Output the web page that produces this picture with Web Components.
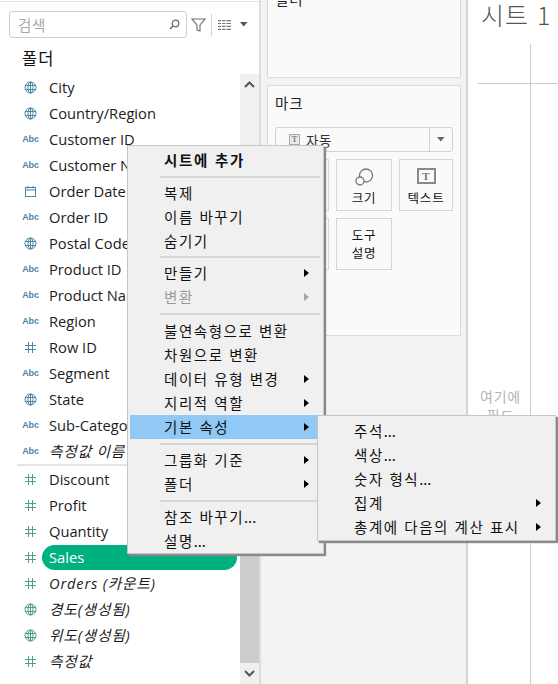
<!DOCTYPE html>
<html lang="ko">
<head>
<meta charset="utf-8">
<title>시트 1</title>
<style>
  html, body { margin: 0; height: 100%; overflow: hidden; background: #fff; }
  body { font-family: "Noto Sans", "Noto Sans CJK KR", sans-serif; color: #111; }
</style>
</head>
<body>
<tab-app>
  <data-pane slot="data">
    <field-row type="globe">City</field-row>
    <field-row type="globe">Country/Region</field-row>
    <field-row type="abc">Customer ID</field-row>
    <field-row type="abc">Customer Name</field-row>
    <field-row type="date">Order Date</field-row>
    <field-row type="abc">Order ID</field-row>
    <field-row type="globe">Postal Code</field-row>
    <field-row type="abc">Product ID</field-row>
    <field-row type="abc">Product Name</field-row>
    <field-row type="abc">Region</field-row>
    <field-row type="hash">Row ID</field-row>
    <field-row type="abc">Segment</field-row>
    <field-row type="globe">State</field-row>
    <field-row type="abc">Sub-Category</field-row>
    <field-row type="abc" italic>측정값 이름</field-row>
    <field-divider></field-divider>
    <field-row type="hash" measure>Discount</field-row>
    <field-row type="hash" measure>Profit</field-row>
    <field-row type="hash" measure>Quantity</field-row>
    <field-row type="hash" measure selected>Sales</field-row>
    <field-row type="hash" measure italic>Orders (카운트)</field-row>
    <field-row type="globe" measure italic>경도(생성됨)</field-row>
    <field-row type="globe" measure italic>위도(생성됨)</field-row>
    <field-row type="hash" measure italic>측정값</field-row>
  </data-pane>
  <shelf-pane slot="shelves"></shelf-pane>
  <sheet-view slot="sheet"></sheet-view>
  <context-menu slot="overlay" style="left:127px;top:145px;width:197px">
    <menu-item bold>시트에 추가</menu-item>
    <menu-sep h="9"></menu-sep>
    <menu-item>복제</menu-item>
    <menu-item>이름 바꾸기</menu-item>
    <menu-item>숨기기</menu-item>
    <menu-sep h="8"></menu-sep>
    <menu-item arrow>만들기</menu-item>
    <menu-item arrow disabled>변환</menu-item>
    <menu-sep h="10"></menu-sep>
    <menu-item>불연속형으로 변환</menu-item>
    <menu-item>차원으로 변환</menu-item>
    <menu-item arrow>데이터 유형 변경</menu-item>
    <menu-item arrow>지리적 역할</menu-item>
    <menu-item arrow active>기본 속성</menu-item>
    <menu-sep h="9"></menu-sep>
    <menu-item arrow>그룹화 기준</menu-item>
    <menu-item arrow>폴더</menu-item>
    <menu-sep h="9"></menu-sep>
    <menu-item>참조 바꾸기<span style="letter-spacing:0">...</span></menu-item>
    <menu-item>설명<span style="letter-spacing:0">...</span></menu-item>
  </context-menu>
  <context-menu slot="overlay" style="left:317px;top:415px;width:239px;padding-top:3px;padding-bottom:1px">
    <menu-item>주석<span style="letter-spacing:0">...</span></menu-item>
    <menu-item>색상<span style="letter-spacing:0">...</span></menu-item>
    <menu-item>숫자 형식<span style="letter-spacing:0">...</span></menu-item>
    <menu-item arrow>집계</menu-item>
    <menu-item arrow>총계에 다음의 계산 표시</menu-item>
  </context-menu>
</tab-app>

<script>
const KO = '"Noto Sans CJK KR", sans-serif';

function tpl(html) {
  const t = document.createElement("template");
  t.innerHTML = html;
  return t;
}

class Base extends HTMLElement {
  constructor() {
    super();
    const shadow = this.attachShadow({ mode: "open" });
    shadow.append(this.constructor.template.content.cloneNode(true));
  }
}

class TabApp extends Base {
  static template = tpl(`
    <style>
      :host { display: grid; grid-template-columns: 261px 207px 1fr; height: 684px; position: relative; overflow: hidden; }
    </style>
    <slot name="data"></slot>
    <slot name="shelves"></slot>
    <slot name="sheet"></slot>
    <slot name="overlay"></slot>
  `);
}

class SearchBar extends Base {
  static template = tpl(`
    <style>
      :host { display: flex; align-items: center; height: 27px; }
      .box { width: 162px; height: 25px; border: 1px solid #cfcfcf; border-radius: 3px; display: flex; align-items: center; justify-content: space-between; padding: 0 6px 0 8px; }
      .ph { font: 14.5px ${KO}; color: #a9a9a9; letter-spacing: .6px; }
      .tools { display: flex; align-items: center; margin-left: 4px; }
      .sep { width: 1px; height: 22px; background: #d2d2d2; margin: 0 6px 0 5px; }
      svg { display: block; }
    </style>
    <div class="box">
      <span class="ph">검색</span>
      <svg width="11" height="11" viewBox="0 0 11 11" fill="none" stroke="#666" stroke-width="1.2"><circle cx="6.5" cy="4.5" r="3.3"/><path d="M4 7 1 10" stroke-width="1.5"/></svg>
    </div>
    <div class="tools">
      <svg width="15" height="14" viewBox="0 0 15 14" fill="none" stroke="#6e6e6e" stroke-width="1.1"><path d="M1 1h13L9 7v6L6 12V7z"/></svg>
      <div class="sep"></div>
      <svg width="13" height="10" viewBox="0 0 13 10" fill="#777"><path d="M0 0h3v1.200H0zM4 0h3.500v1.200H4zM8.500 0H13v1.200H8.500zM0 2.900h3v1.200H0zM4 2.900h3.500v1.200H4zM8.500 2.900H13v1.200H8.500zM0 5.800h3V7H0zM4 5.800h3.500V7H4zM8.500 5.800H13V7H8.500zM0 8.700h3v1.200H0zM4 8.700h3.500v1.200H4zM8.500 8.700H13v1.200H8.500z"/></svg>
      <svg style="margin-left:9px" width="8" height="5" viewBox="0 0 8 5" fill="#555"><path d="M0 0h7.500L3.750 4.500z"/></svg>
    </div>
  `);
}

class ScrollTrack extends Base {
  static template = tpl(`
    <style>
      :host { display: flex; flex-direction: column; width: 19px; background: #f0f0f0; }
      .btn { height: 21px; display: flex; align-items: center; justify-content: center; flex: none; }
      .gap { flex: none; height: 70px; }
      .thumb { flex: 1; background: #cdcdcd; }
    </style>
    <div class="btn"><svg width="11" height="7" viewBox="0 0 11 7" fill="none" stroke="#555" stroke-width="2"><path d="M1 6 5.500 1.500 10 6"/></svg></div>
    <div class="gap"></div>
    <div class="thumb"></div>
    <div class="btn"><svg width="11" height="7" viewBox="0 0 11 7" fill="none" stroke="#555" stroke-width="2"><path d="M1 1l4.500 4.500L10 1"/></svg></div>
  `);
}

class DataPane extends Base {
  static template = tpl(`
    <style>
      :host { display: grid; grid-template-rows: 74px 1fr; grid-template-columns: 240px 19px; border-right: 2px solid #dcdcdc; background: #fff; width: 259px; height: 684px; }
      .head { grid-column: 1 / 3; padding: 9px 0 0 9px; border-top: 1px solid #e4e4e4; margin-top: 1px; box-sizing: border-box; height: 73px; }
      h2 { margin: 10px 0 0 13px; font: 400 16.500px/20px ${KO}; letter-spacing: 1px; color: #111; }
      .list { display: flex; flex-direction: column; overflow: hidden; }
    </style>
    <div class="head">
      <search-bar></search-bar>
      <h2>폴더</h2>
    </div>
    <div class="list"><slot></slot></div>
    <scroll-track></scroll-track>
  `);
}

const GLOBE = `<svg width="13" height="13" viewBox="0 0 13 13" fill="none" stroke="currentColor" stroke-width="1"><circle cx="6.500" cy="6.500" r="5.500"/><ellipse cx="6.500" cy="6.500" rx="2.500" ry="5.500"/><path d="M1 4.500h11M1 8.500h11M6.500 1v11"/></svg>`;
const HASH = `<svg width="11" height="11" viewBox="0 0 11 11" fill="none" stroke="currentColor" stroke-width="1"><path d="M3.500 0v11M7.500 0v11M0 3.500h11M0 7.500h11"/></svg>`;
const DATE = `<svg width="11" height="11" viewBox="0 0 11 11" fill="none" stroke="currentColor" stroke-width="1"><rect x=".5" y="1.500" width="10" height="9"/><path d="M.5 4h10M3 0v2.500M8 0v2.500"/></svg>`;

class FieldRow extends Base {
  static template = tpl(`
    <style>
      :host { display: flex; align-items: center; height: 26px; flex: none; font: 14.700px "Open Sans", ${KO}; color: #1c1c1c; white-space: nowrap; }
      .icon { width: 24px; margin-left: 18px; flex: none; display: flex; justify-content: center; color: #4b87a1; }
      svg { display: block; }
      .abc { font: 700 9px "Liberation Sans", sans-serif; letter-spacing: -.2px; margin-left: 1px; font-style: normal; }
      :host([measure]) .icon { color: #4f9f84; }
      .label { flex: 1; padding-left: 7px; margin-right: 3px; height: 25px; line-height: 25px; border-radius: 13px; }
      :host([italic]) .label { font-style: italic; letter-spacing: .8px; }
      :host([selected]) .label { background: #00b180; color: #fff; }
    </style>
    <div class="icon"></div>
    <div class="label"><slot></slot></div>
  `);
  connectedCallback() {
    const icon = this.shadowRoot.querySelector(".icon");
    const type = this.getAttribute("type");
    if (type === "abc") icon.innerHTML = `<span class="abc">Abc</span>`;
    else icon.innerHTML = type === "globe" ? GLOBE : type === "date" ? DATE : HASH;
  }
}

class FieldDivider extends Base {
  static template = tpl(`
    <style>:host { display: block; height: 2px; flex: none; margin-left: 17px; background: #e4e4e4; }</style>
  `);
}

class ShelfCard extends Base {
  static template = tpl(`
    <style>
      :host { display: block; box-sizing: border-box; background: #fafafa; border: 1.500px solid #dcdcdc; padding: 7px 7px; }
      h3 { margin: 0; font: 400 14.500px/20px ${KO}; letter-spacing: .8px; color: #222; }
    </style>
    <h3><slot name="title"></slot></h3>
    <slot></slot>
  `);
}

class MarkButton extends Base {
  static template = tpl(`
    <style>
      :host { display: flex; flex-direction: column; align-items: center; justify-content: flex-end; height: 52px; box-sizing: border-box; border: 1px solid #d6d6d6; font: 12.500px/18px ${KO}; letter-spacing: .8px; color: #111; padding-bottom: 3px; text-align: center; }
      :host([center]) { justify-content: center; padding-bottom: 0; }
    </style>
    <slot name="icon"></slot>
    <slot></slot>
  `);
}

class ShelfPane extends Base {
  static template = tpl(`
    <style>
      :host { display: flex; flex-direction: column; gap: 7px; background: #f3f3f3; padding: 0 5px 0 6px; border-right: 2px solid #d4d4d4; height: 684px; box-sizing: border-box; overflow: hidden; width: 207px; }
      .filter { height: 97px; margin-top: -19px; flex: none; }
      .marks { height: 251px; flex: none; }
      .drop { display: flex; align-items: center; height: 25px; box-sizing: border-box; border: 1px solid #d2d2d2; border-radius: 3px; margin-top: 14px; background: #fafafa; font: 13.500px ${KO}; letter-spacing: .7px; color: #333; }
      .drop .val { flex: 1; display: flex; align-items: center; gap: 6px; padding-left: 13px; }
      .drop .car { width: 22px; height: 100%; border-left: 1px solid #d2d2d2; display: flex; align-items: center; justify-content: center; }
      .t-sm { width: 9px; height: 9px; border: 1px solid #aaa; background: #e9e9e9; font: 700 9px/9px "Liberation Serif", serif; text-align: center; color: #888; letter-spacing: 0; }
      .grid { display: grid; grid-template-columns: 54px 56px 54px; gap: 7px; margin-top: 7px; }
      .t-lg { width: 15px; height: 12px; border: 2px solid #888; font: 700 11px/12px "Liberation Serif", serif; text-align: center; color: #777; margin-bottom: 5px; letter-spacing: 0; }
      svg { display: block; }
    </style>
    <shelf-card class="filter"><span slot="title">필터</span></shelf-card>
    <shelf-card class="marks">
      <span slot="title">마크</span>
      <div class="drop">
        <div class="val"><div class="t-sm">T</div><span>자동</span></div>
        <div class="car"><svg width="8" height="5" viewBox="0 0 8 5" fill="#666"><path d="M0 0h7.500L3.750 4.500z"/></svg></div>
      </div>
      <div class="grid">
        <mark-button>색상</mark-button>
        <mark-button>
          <svg slot="icon" style="margin-bottom:3px" width="19" height="18" viewBox="0 0 19 18" fill="none" stroke="#777" stroke-width="1.300"><circle cx="11" cy="7.500" r="6.500"/><circle cx="5" cy="13" r="4" fill="#fafafa"/></svg>
          크기
        </mark-button>
        <mark-button><div slot="icon" class="t-lg">T</div>텍스트</mark-button>
        <mark-button center>세부<br>정보</mark-button>
        <mark-button center>도구<br>설명</mark-button>
      </div>
    </shelf-card>
  `);
}

class SheetView extends Base {
  static template = tpl(`
    <style>
      :host { display: grid; grid-template-columns: 63px 1fr; grid-template-rows: 44px 40px 1fr; background: #fff; height: 684px; overflow: hidden; }
      h1 { grid-column: 1 / 3; margin: 0; padding: 1px 0 0 13px; font: 300 25px/26px ${KO}; letter-spacing: 1px; color: #555; white-space: nowrap; }
      .corner { border-right: 1px solid #cbcbcb; border-bottom: 1px solid #cbcbcb; margin-left: 10px; }
      .top { border-bottom: 1px solid #cbcbcb; }
      .rows { border-right: 1px solid #cbcbcb; text-align: center; font: 14px/19px ${KO}; letter-spacing: .8px; color: #b4b4b4; padding: 303px 0 0 3px; }
    </style>
    <h1>시트 1</h1>
    <div class="corner"></div>
    <div class="top"></div>
    <div class="rows">여기에<br>필드<br>놓기</div>
  `);
}

class ContextMenu extends Base {
  static template = tpl(`
    <style>
      :host { display: block; position: absolute; box-sizing: border-box; background: #f0f0f0; border: 1px solid #c6c6c6; box-shadow: 2px 2px 1px #8a8a8a; padding: 2px 0 0 2px; font: 14.500px ${KO}; letter-spacing: 1.550px; color: #111; z-index: 1; }
    </style>
    <slot></slot>
  `);
}

class MenuItem extends Base {
  static template = tpl(`
    <style>
      :host { display: flex; align-items: center; justify-content: space-between; box-sizing: border-box; height: 24px; padding: 0 14px 2px 34px; white-space: nowrap; }
      :host([bold]) { font-weight: 700; letter-spacing: 1.700px; }
      :host([disabled]) { color: #9a9a9a; }
      :host([active]) { background: #90c8f6; }
      .arr { display: none; width: 0; height: 0; margin-top: 2px; border-left: 5px solid #000; border-top: 4px solid transparent; border-bottom: 4px solid transparent; }
      :host([arrow]) .arr { display: block; }
      :host([disabled]) .arr { border-left-color: #a5a5a5; }
    </style>
    <span><slot></slot></span><i class="arr"></i>
  `);
}

class MenuSep extends Base {
  static template = tpl(`
    <style>
      :host { display: flex; align-items: center; padding: 0 3px 0 30px; }
      div { flex: 1; height: 2px; background: #d6d6d6; }
    </style>
    <div></div>
  `);
  connectedCallback() {
    this.style.height = (this.getAttribute("h") || 8) + "px";
  }
}

customElements.define("search-bar", SearchBar);
customElements.define("scroll-track", ScrollTrack);
customElements.define("field-row", FieldRow);
customElements.define("field-divider", FieldDivider);
customElements.define("data-pane", DataPane);
customElements.define("shelf-card", ShelfCard);
customElements.define("mark-button", MarkButton);
customElements.define("shelf-pane", ShelfPane);
customElements.define("sheet-view", SheetView);
customElements.define("context-menu", ContextMenu);
customElements.define("menu-item", MenuItem);
customElements.define("menu-sep", MenuSep);
customElements.define("tab-app", TabApp);
</script>
</body>
</html>
